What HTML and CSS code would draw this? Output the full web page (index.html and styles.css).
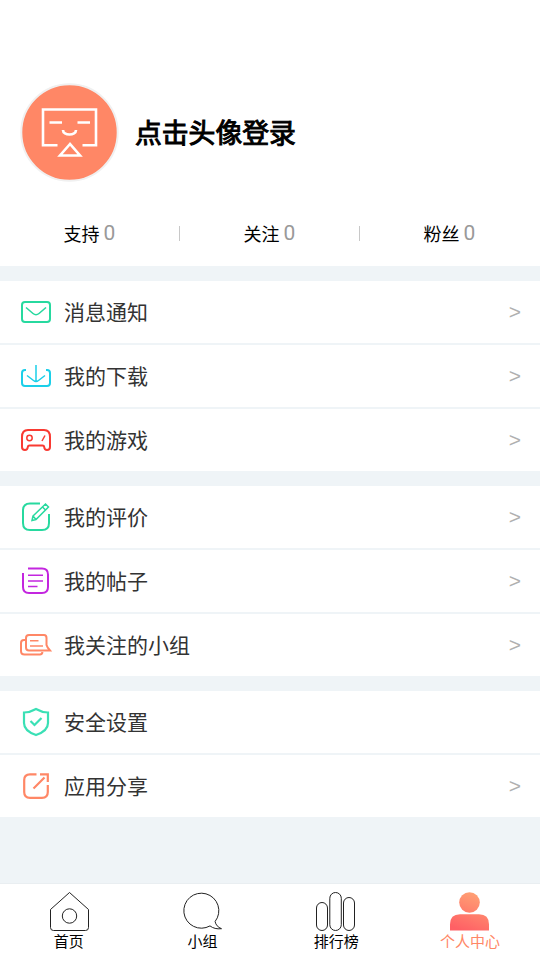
FILE: index.html
```html
<!DOCTYPE html>
<html lang="zh-CN">
<head>
<meta charset="utf-8">
<title>个人中心</title>
<link rel="stylesheet" href="styles.css">
</head>
<body>
<main class="page">
  <header class="profile">
    <div class="user">
      <svg class="avatar" viewBox="20 83 99 99">
        <circle cx="69.5" cy="132.5" r="48.2" fill="#ff8766" stroke="#f0f0f0" stroke-width="2"/>
        <g fill="none" stroke="#fff" stroke-width="2.6">
          <path d="M57.500 145.200H43V109.500H96V145.200H82.500"/>
          <path d="M49.500 122.500H62M77.500 122.500H90"/>
          <path d="M63 130C63 136 76 136 76 130" stroke-width="2.700"/>
          <path d="M70 144L60 155.500H80Z"/>
        </g>
      </svg>
      <h1 class="name">点击头像登录</h1>
    </div>
    <div class="stats">
      <div class="stat">支持<span class="count">0</span></div>
      <div class="stat">关注<span class="count">0</span></div>
      <div class="stat">粉丝<span class="count">0</span></div>
    </div>
  </header>

  <section class="group">
    <a class="row">
      <svg class="icon" viewBox="18 294 36 36" stroke="#27d99f" stroke-width="2"><rect x="22" y="302" width="28" height="20" rx="3"/><path d="M26 307.5L33 313.5Q36 316 39 313.5L46 307.5" stroke-width="1.6"/></svg>
      <span class="label">消息通知</span><span class="arrow">&gt;</span>
    </a>
    <a class="row">
      <svg class="icon" viewBox="18 358 36 36" stroke="#1bcfe9" stroke-width="2"><path d="M26 370H25Q22 370 22 373V383Q22 386 25 386H47Q50 386 50 383V373Q50 370 47 370H46"/><path d="M36 365V381M27 375.5L33.5 380.5Q36 382.5 38.5 380.5L45 375.5" stroke-width="1.5"/></svg>
      <span class="label">我的下载</span><span class="arrow">&gt;</span>
    </a>
    <a class="row">
      <svg class="icon" viewBox="18 422 36 36" stroke="#f93a32" stroke-width="2"><path d="M28 430H44Q50 430 50 437V447Q50 450 47 450Q44.500 450 44.200 447Q44 445.500 42.500 445.500H29.500Q28 445.500 27.800 447Q27.500 450 25 450Q22 450 22 447V437Q22 430 28 430Z"/><circle cx="29.500" cy="438" r="2.700" stroke-width="1.500"/><path d="M45 435.500L42 441" stroke-width="1.500"/></svg>
      <span class="label">我的游戏</span><span class="arrow">&gt;</span>
    </a>
  </section>

  <section class="group">
    <a class="row">
      <svg class="icon" viewBox="18 499 36 36" stroke="#27d99f" stroke-width="2"><path d="M40 503.500H30Q23 503.500 23 510.500V523Q23 530 30 530H42Q49 530 49 523V514"/><path d="M33 516L45.500 504L48.500 507L36 519.500L32 520.500ZM33 516L36 519.500M42.500 507L45.500 510" stroke-width="1.500"/></svg>
      <span class="label">我的评价</span><span class="arrow">&gt;</span>
    </a>
    <a class="row">
      <svg class="icon" viewBox="18 563 36 36" stroke="#c326df" stroke-width="2"><path d="M28 568.500H42Q48 568.500 48 574.500V587Q48 593 42 593H29Q23 593 23 587V573"/><path d="M28 575.300H43M28 581H43M28 586.500H37.500" stroke-width="1.500"/></svg>
      <span class="label">我的帖子</span><span class="arrow">&gt;</span>
    </a>
    <a class="row">
      <svg class="icon" viewBox="18 627 36 36" stroke="#ff8766" stroke-width="2"><path d="M25 640H24Q21 640 21 643V651Q21 654.500 24.500 654.500H40Q42 654.500 42.500 652"/><path d="M29 635H44Q46.500 635 46.500 638V645Q47 647 50 650.500H29Q26 650.500 26 647.500V638Q26 635 29 635Z"/><path d="M30 640.700H38.500M30 646H43" stroke-width="1.500"/></svg>
      <span class="label">我关注的小组</span><span class="arrow">&gt;</span>
    </a>
  </section>

  <section class="group">
    <a class="row">
      <svg class="icon" viewBox="18 704 36 36" stroke="#3ae0b5" stroke-width="2.200"><path d="M36 709Q42 712.500 48 712.500V723Q48 731 36 735Q24 731 24 723V712.500Q30 712.500 36 709Z"/><path d="M30.500 721L34.500 725L41.500 718"/></svg>
      <span class="label">安全设置</span>
    </a>
    <a class="row">
      <svg class="icon" viewBox="18 768 36 36" stroke="#ff8766" stroke-width="2.200"><path d="M36.500 774.300H30Q24.200 774.300 24.200 780V792Q24.200 797.800 30 797.800H42Q47.800 797.800 47.800 792V785"/><path d="M40 774.300H47.800V782M44.500 777.500L33.500 788.500"/></svg>
      <span class="label">应用分享</span><span class="arrow">&gt;</span>
    </a>
  </section>

  <nav class="tabs">
    <a class="tab">
      <svg class="tab-icon" viewBox="48 890 42 42"><path d="M69.500 892.500L88.500 909.500V927.500Q88.500 930.500 85.500 930.500H53.500Q50.500 930.500 50.500 927.500V909.500Z"/><circle cx="69.500" cy="916" r="7.200"/></svg>
      <span>首页</span>
    </a>
    <a class="tab">
      <svg class="tab-icon" viewBox="181.500 890 42 42"><path d="M209.500 925.900A17.500 17.500 0 1 1 214.600 921.500Q215.500 926.500 221 928.700Q214 929.500 209.500 925.900"/></svg>
      <span>小组</span>
    </a>
    <a class="tab">
      <svg class="tab-icon" viewBox="315 890 42 42"><rect x="316.500" y="902.500" width="11" height="28" rx="5.500"/><rect x="329.800" y="892.500" width="11.500" height="38" rx="5.750"/><rect x="343.500" y="897.500" width="11" height="33" rx="5.500"/></svg>
      <span>排行榜</span>
    </a>
    <a class="tab active">
      <svg class="tab-icon" viewBox="449 890 42 42">
        <defs><linearGradient id="warm" gradientUnits="userSpaceOnUse" x1="478" y1="893" x2="464" y2="931"><stop offset="0" stop-color="#ffa274"/><stop offset="1" stop-color="#ff6065"/></linearGradient></defs>
        <g fill="url(#warm)" stroke="none"><circle cx="469.500" cy="902.500" r="10.300"/><path d="M450 930.500V924.500Q450 914.300 460 914.300H479Q489 914.300 489 924.500V930.500Z"/></g>
      </svg>
      <span>个人中心</span>
    </a>
  </nav>
</main>
</body>
</html>
```
FILE: styles.css
```css
* { box-sizing: border-box; }

body {
  margin: 0;
  background: #eff4f7;
  color: #333;
  font-family: "Noto Sans CJK SC", sans-serif;
}

.page {
  display: flex;
  flex-direction: column;
  gap: 15px;
  width: 540px;
  height: 960px;
}

.profile {
  height: 266px;
  padding-top: 83px;
  background: #fff;
  color: #000;
}

.user {
  display: flex;
  align-items: center;
  gap: 16px;
  padding-left: 20px;
}

.avatar { width: 99px; height: 99px; }

.name {
  margin: 0;
  padding-bottom: 1px;
  font-size: 26.8px;
  line-height: 40px;
  font-weight: 400;
  -webkit-text-stroke: 1px #000;
}

.stats {
  display: flex;
  margin-top: 36px;
}

.stat {
  position: relative;
  display: flex;
  flex: 1;
  align-items: center;
  justify-content: center;
  gap: 4px;
  height: 30px;
  padding-right: 1px;
  font-size: 18px;
  line-height: 30px;
}

.stat + .stat::before {
  content: "";
  position: absolute;
  left: -1px;
  top: 8px;
  width: 1px;
  height: 15px;
  background: #c8c8c8;
}

.count {
  color: #999;
  font: 400 21px/30px Roboto, sans-serif;
}

.group { background: #fff; }

.row {
  display: flex;
  align-items: center;
  height: 62px;
  padding: 0 19px 0 18px;
}

.row + .row {
  height: 64px;
  border-top: 2px solid #eff4f7;
}

.icon {
  width: 36px;
  height: 36px;
  fill: none;
}

.label {
  flex: 1;
  margin-left: 10px;
  padding-bottom: 2px;
  font-size: 21px;
  line-height: 32px;
}

.arrow {
  color: #b0b0b0;
  font: 21px/32px "Liberation Sans", sans-serif;
}

.tabs {
  display: flex;
  height: 77px;
  margin-top: auto;
  padding: 6px 3px 0 2px;
  border-top: 1px solid #e9eef1;
  background: #fff;
}

.tab {
  display: flex;
  flex: 1;
  flex-direction: column;
  align-items: center;
  color: #000;
  font-size: 15px;
  line-height: 18px;
}

.tab-icon {
  width: 42px;
  height: 42px;
  fill: none;
  stroke: #222;
  stroke-width: 1;
}

.active { color: #ff8766; }
```
